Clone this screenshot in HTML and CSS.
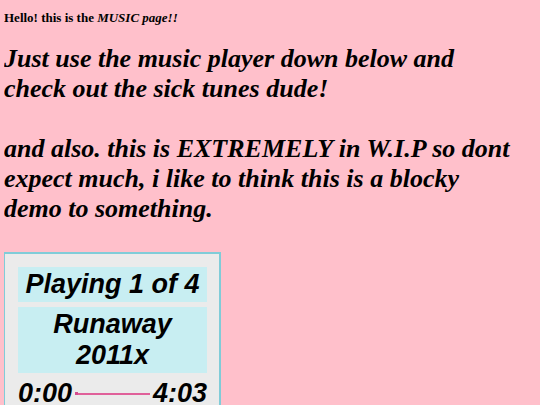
FILE: index.html
```html
<!DOCTYPE html>
<html>
<head>
<meta charset="utf-8">
<link rel="stylesheet" href="styles.css">
</head>
<body>
<p class="hello">Hello! this is the <i>MUSIC page!!</i></p>
<p class="big">Just use the music player down below and check out the sick tunes dude!</p>
<p class="big">and also. this is EXTREMELY in W.I.P so dont expect much, i like to think this is a blocky demo to something.</p>
<div class="player">
  <div class="box">Playing 1 of 4</div>
  <div class="box">Runaway<br>2011x</div>
  <div class="time">
    <span>0:00</span>
    <div class="slider"><div class="thumb"></div><div class="track"></div></div>
    <span>4:03</span>
  </div>
</div>
</body>
</html>
```
FILE: styles.css
```css
html, body { background: #ffc0cb; }
body { margin: 0 4px; font-family: "Liberation Serif", serif; color: #000; overflow: hidden; }
.hello { font-size: 13px; font-weight: bold; margin: 10px 0 0; }
.big { max-width: 512px; font-size: 26px; font-weight: bold; font-style: italic; margin: 18px 0 0; line-height: 30px; }
.big + .big { margin-top: 30px; }
.player {
  margin-top: 28px; margin-left: -1px; width: 189px; padding: 13px 12px 13px 13px;
  background: #ebebeb; border: 2px solid #80ccd8;
  font-family: "Liberation Sans", sans-serif; font-weight: bold; font-style: italic; font-size: 27px;
}
.box { background: #c8eef2; text-align: center; line-height: 31px; padding: 2px 0; margin-bottom: 5px; }
.time { display: flex; align-items: center; line-height: 31px; }
.slider { flex: 1; display: flex; align-items: center; margin: 0 3px 0 3px; }
.thumb { width: 3px; height: 3px; background: #d44c8e; }
.track { flex: 1; height: 2px; background: #e0609a; }
```
